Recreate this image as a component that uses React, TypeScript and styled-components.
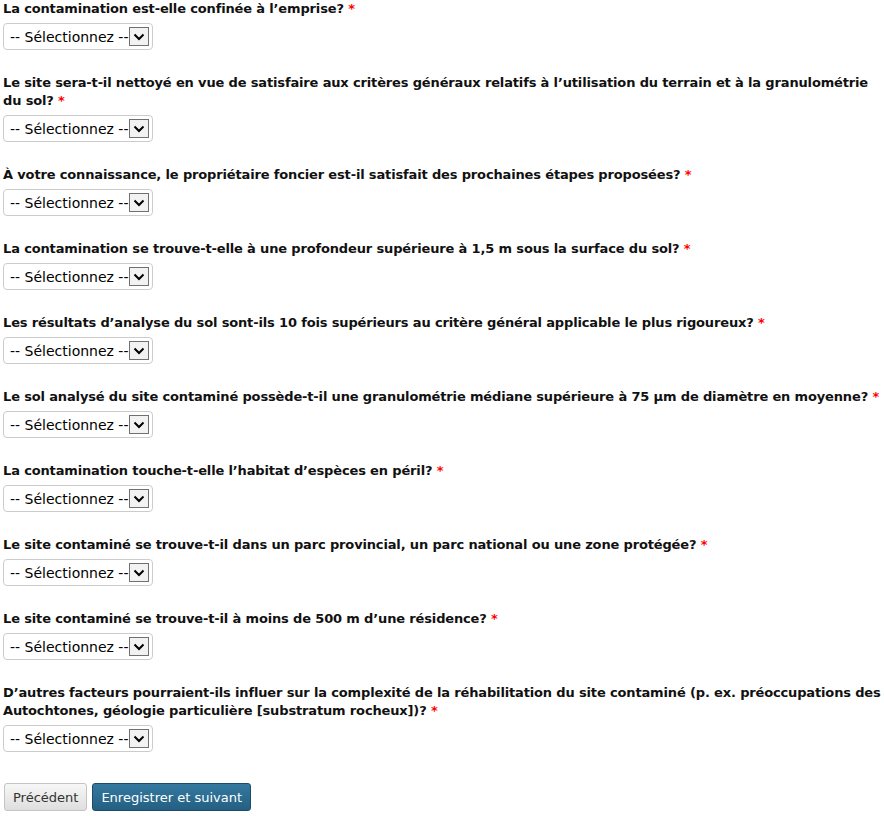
import React from "react";
import styled, { createGlobalStyle } from "styled-components";

const questions: string[] = [
  "La contamination est-elle confinée à l’emprise?",
  "Le site sera-t-il nettoyé en vue de satisfaire aux critères généraux relatifs à l’utilisation du terrain et à la granulométrie du sol?",
  "À votre connaissance, le propriétaire foncier est-il satisfait des prochaines étapes proposées?",
  "La contamination se trouve-t-elle à une profondeur supérieure à 1,5 m sous la surface du sol?",
  "Les résultats d’analyse du sol sont-ils 10 fois supérieurs au critère général applicable le plus rigoureux?",
  "Le sol analysé du site contaminé possède-t-il une granulométrie médiane supérieure à 75 µm de diamètre en moyenne?",
  "La contamination touche-t-elle l’habitat d’espèces en péril?",
  "Le site contaminé se trouve-t-il dans un parc provincial, un parc national ou une zone protégée?",
  "Le site contaminé se trouve-t-il à moins de 500 m d’une résidence?",
  "D’autres facteurs pourraient-ils influer sur la complexité de la réhabilitation du site contaminé (p. ex. préoccupations des Autochtones, géologie particulière [substratum rocheux])?",
];

const GlobalStyle = createGlobalStyle`
  body {
    margin: 0;
    background: #fff;
    font-family: Verdana, "DejaVu Sans", sans-serif;
    color: #000;
  }
`;

const App = () => {
  return (
    <>
      <GlobalStyle />
      <Form>
        {questions.map((q, id) => (
          <Question key={id}>
            <Label htmlFor={"q" + id}>
              {q} <Required>*</Required>
            </Label>
            <SelectBox>
              <Select id={"q" + id} defaultValue="">
                <option value="">-- Sélectionnez --</option>
                <option value="oui">Oui</option>
                <option value="non">Non</option>
              </Select>
              <Arrow>
                <svg width="12" height="8" viewBox="0 0 12 8">
                  <path d="M1.5 1.5 L6 6 L10.5 1.5" fill="none" stroke="#000" strokeWidth="2" />
                </svg>
              </Arrow>
            </SelectBox>
          </Question>
        ))}
        <Buttons>
          <Button type="button">Précédent</Button>
          <PrimaryButton type="button">Enregistrer et suivant</PrimaryButton>
        </Buttons>
      </Form>
    </>
  );
};

export default App;

const Form = styled.form`
  padding: 0 3px;
  width: 878px;
  display: flex;
  flex-direction: column;
`;
const Question = styled.div`
  display: flex;
  flex-direction: column;
  align-items: flex-start;
  margin-bottom: 24px;
`;
const Label = styled.label`
  font-size: 13px;
  font-weight: bold;
  letter-spacing: -0.15px;
  line-height: 18px;
  margin-bottom: 5px;
  color: #111;
`;
const Required = styled.span`
  color: #f00;
`;
const SelectBox = styled.div`
  position: relative;
  display: inline-flex;
  align-items: center;
  width: 150px;
  height: 27px;
  box-sizing: border-box;
  border: 1px solid #ccc;
  border-radius: 4px;
  background: #fff;
  overflow: hidden;
`;
const Select = styled.select`
  appearance: none;
  border: none;
  outline: none;
  background: transparent;
  font-family: Verdana, "DejaVu Sans", sans-serif;
  font-size: 14px;
  color: #000;
  padding: 0 0 0 6px;
  width: 100%;
  height: 100%;
`;
const Arrow = styled.span`
  position: absolute;
  right: 3px;
  top: 3px;
  width: 20px;
  height: 19px;
  box-sizing: border-box;
  border: 1px solid #707070;
  background: #f2f2f2;
  display: flex;
  align-items: center;
  justify-content: center;
  pointer-events: none;
`;
const Buttons = styled.div`
  display: flex;
  gap: 5px;
  margin-top: 7px;
  padding-left: 1px;
`;
const Button = styled.button`
  height: 28px;
  padding: 0 8px;
  font-family: Verdana, "DejaVu Sans", sans-serif;
  font-size: 13px;
  color: #333;
  border: 1px solid #c4c4c4;
  border-radius: 3px;
  background: linear-gradient(#f7f7f7, #dedede);
  cursor: pointer;
`;
const PrimaryButton = styled(Button)`
  color: #fff;
  border-color: #1c4c68;
  background: linear-gradient(#34799f, #245f82);
`;
